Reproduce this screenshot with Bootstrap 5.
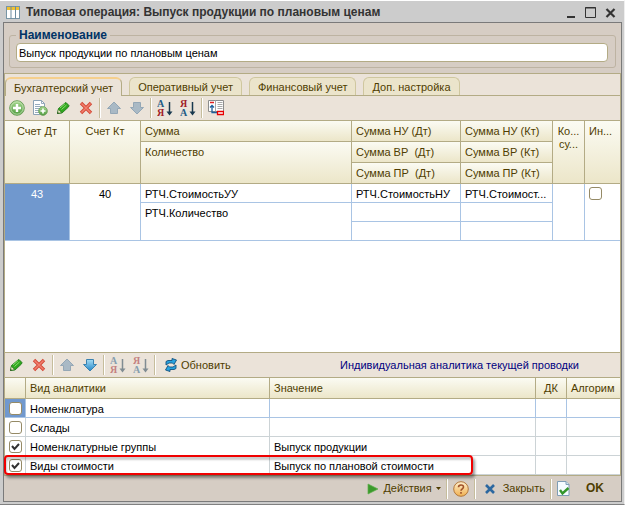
<!DOCTYPE html>
<html lang="ru">
<head>
<meta charset="utf-8">
<meta name="viewport" content="width=device-width, initial-scale=1">
<title>Типовая операция</title>
<link href="https://cdn.jsdelivr.net/npm/bootstrap@5.3.0/dist/css/bootstrap.min.css" rel="stylesheet">
<style>
:root{--olive:#b3ab85;--sand:#d6cdc4;--cream:#ebe3d9;--brown:#4f3d00;--sky:#a9c4e4}
body{font:11px/13px "Liberation Sans",Arial,sans-serif;color:#000;background:#ccc}
button{font:inherit;color:inherit;background:none;border:0;padding:0}
svg{display:block;flex:none}
.win{border-top:1px solid #fff;border-right:1px solid #eee;border-bottom:1px solid #808080;padding:0 2px 2px 3px}
.titlebar{height:21px;padding:5px 6px 0 3px;font-size:12px;font-weight:700;color:#333;gap:6px}
.wbtns{gap:9px}
.client{border:1px solid #7a7a7a;background:var(--sand)}
.form-zone{padding:5px;height:50px}
.name-box{border:1px solid #bdb3a2;border-radius:3px;height:33px;margin-top:7px;padding:7px 7px 5px 6px;position:relative}
.name-box label{position:absolute;top:-7px;left:6px;padding:0 3px;background:var(--sand);color:#003366;font-size:12px;font-weight:700}
.name-box input{display:block;width:100%;height:19px;border:1px solid var(--olive);border-radius:4px;background:#fff;padding:0 2px;outline:0;font-size:11px;color:#000}
.work{border:solid var(--olive);border-width:1px 1px 0;background:var(--cream)}
.tabs{height:22px;padding-top:3px;gap:7px;flex-wrap:nowrap;box-shadow:inset 0 -1px var(--olive)}
.tabs .nav-link{height:18px;border:1px solid #cfc79f;border-bottom:0;border-radius:6px 6px 0 0;background:#ebe4cb;color:var(--brown);padding:2px 8px 0;line-height:15px;white-space:nowrap}
.tabs .nav-link.active{height:19px;background:var(--cream);border-color:var(--olive);border-top:2px solid #f5cf8c;padding:1px 8px 0}
.tools{height:25px;padding:0 4px;gap:7px;border-bottom:1px solid var(--olive);color:var(--brown)}
.tools.lower{height:26px;padding-left:3px;border-top:1px solid var(--olive)}
.vline{flex:none;width:2px;height:20px;margin:0 -2px;background:linear-gradient(90deg,#c6bd9c 50%,#fff 50%)}
.upper-box{background:#fff}
.grid{width:100%;table-layout:fixed;border-collapse:separate;border-spacing:0;background:#fff}
.grid th,.grid td{padding:4px 4px 0;overflow:hidden;white-space:nowrap;text-overflow:ellipsis;vertical-align:top;border-right:1px solid var(--sky);border-bottom:1px solid var(--sky)}
.grid th{font-weight:400;color:var(--brown);border-color:var(--olive);background:linear-gradient(#fbfbf3,#ece6c9)}
.grid tr>.edge{border-right:0}
.grid thead tr{height:21px}
.grid tbody tr{height:19px}
.grid .picked{background:#7098ce;color:#fff}
.grid .bare{padding:3px 0 0 4px}
.soft td{border-color:#ccd3d6}
.c-acc{width:65px}.c-cor{width:71px}.c-dt{width:109px}.c-kt{width:92px}.c-ko{width:32px}.c-in{width:35px}
.c-chk{width:21px}.c-kind{width:244px}.c-dk{width:31px}.c-alg{width:53px}
.tick{display:block;appearance:none;width:13px;height:13px;margin:0;border:1px solid #958a66;border-radius:3px;background:#fff}
.tick:checked{background:#fff url("data:image/svg+xml,%3Csvg xmlns='http://www.w3.org/2000/svg' viewBox='0 0 11 11'%3E%3Cpath d='M2 5l2.500 3L9 3' fill='none' stroke='%23333' stroke-width='2'/%3E%3C/svg%3E")}
.marker{position:absolute;left:-1px;right:147px;bottom:0;height:20px;border:2px solid #f00000;border-radius:4px;box-shadow:2px 3px 3px #0006,inset 1px 3px 2px #0003;pointer-events:none}
.bottom{height:26px;color:var(--brown);padding-right:17px;gap:8px;border-top:1px solid var(--olive)}
.bottom .vline{margin:0 -3px}
.caption-blue{color:#000080;margin-right:37px}
.ok-btn{font-size:12px;font-weight:700;padding-left:8px}
.glyph{font:bold 10px "Liberation Serif",serif}
</style>
<script src="https://cdn.jsdelivr.net/npm/bootstrap@5.3.0/dist/js/bootstrap.bundle.min.js"></script>
</head>
<body>
<svg width="0" height="0" class="position-absolute" aria-hidden="true">
<defs>
<linearGradient id="gg" x2="0" y2="1"><stop stop-color="#a9d992"/><stop offset="1" stop-color="#4e9a3e"/></linearGradient>
<linearGradient id="gb" x2="0" y2="1"><stop stop-color="#a4dcf4"/><stop offset="1" stop-color="#2487c8"/></linearGradient>
<linearGradient id="go" x2="0" y2="1"><stop stop-color="#fff0cf"/><stop offset="1" stop-color="#f0b050"/></linearGradient>
<symbol id="i-add" viewBox="0 0 16 16"><circle cx="8" cy="8" r="7.300" fill="url(#gg)" stroke="#6ea05c"/><circle cx="8" cy="8" r="6.200" fill="none" stroke="#d2ecc4" stroke-width=".7"/><path d="M8 4v8M4 8h8" stroke="#fff" stroke-width="2.400"/></symbol>
<symbol id="i-copy" viewBox="0 0 16 16"><path d="M1.500 .5h8l3 3v11h-11z" fill="#fff" stroke="#8ba2b5"/><path d="M9.500 .5v3h3M3 4.500h5M3 6.500h7M3 8.500h5M3 10.500h4M3 12.500h4" fill="none" stroke="#8ba2b5" stroke-width=".9"/><circle cx="11" cy="11" r="4.400" fill="url(#gg)" stroke="#6ea05c" stroke-width=".8"/><path d="M11 8.500v5M8.500 11h5" stroke="#fff" stroke-width="1.600"/></symbol>
<symbol id="i-pen" viewBox="0 0 16 16"><path d="M2.500 13.500l1-5 6.500-5.500 1-.5 3 3-.5 1.500-6.500 6z" fill="#2fa51e" stroke="#167412" stroke-width=".8"/><path d="M5 8l5-4.300M6.500 9.500l5-4.500" stroke="#8ee070"/><path d="M2.500 13.500l.8-4 3.200 3z" fill="#f4eccb" stroke="#38702a" stroke-width=".6"/><path d="M2.300 13.700l.4-1.700 1.300 1.300z" fill="#153a10"/></symbol>
<symbol id="i-del" viewBox="0 0 16 16"><path d="M3 3l10 10M13 3L3 13" stroke="#d34836" stroke-width="3.400"/><path d="M3.500 3.500l9 9M12.500 3.500l-9 9" stroke="#f2806f" stroke-width="1.500"/></symbol>
<symbol id="i-up" viewBox="0 0 16 16"><path d="M8 2l6.500 6.500h-3v5h-7v-5h-3z" stroke-linejoin="round"/></symbol>
<symbol id="i-down" viewBox="0 0 16 16"><path d="M8 14L1.500 7.500h3v-5h7v5h3z" stroke-linejoin="round"/></symbol>
<symbol id="i-az" viewBox="0 0 16 18"><text x="0" y="8" class="glyph" fill="#1f5c86">А</text><text x="0" y="17" class="glyph" fill="#a02028">Я</text><path d="M12.500 3v11" stroke="#18384f" stroke-width="1.500"/><path d="M9.500 12.500h6l-3 4z" fill="#18384f"/></symbol>
<symbol id="i-za" viewBox="0 0 16 18"><text x="0" y="8" class="glyph" fill="#a02028">Я</text><text x="0" y="17" class="glyph" fill="#1f5c86">А</text><path d="M12.500 3v11" stroke="#18384f" stroke-width="1.500"/><path d="M9.500 12.500h6l-3 4z" fill="#18384f"/></symbol>
<symbol id="i-cols" viewBox="0 0 16 16"><path d="M.5 .5h15v11H.5z" fill="#fff" stroke="#8d8d8d"/><path d="M7.500 .5v11M9.500 2.500h5M9.500 4.500h5M9.500 6.500h5M9.500 8.500h5" stroke="#a8a8a8"/><path d="M2 2.500h4" stroke="#e02020" stroke-width="1.500"/><path d="M4 5v7.500h5M2 7.500l2-2 2 2" fill="none" stroke="#1d5f9b" stroke-width="1.300"/><path d="M9.500 11.500h6v3h-6z" fill="#fff" stroke="#e80000" stroke-width="1.300"/></symbol>
<symbol id="i-ref" viewBox="0 0 12 14"><path d="M1 7V3.500L3 2.500h4V.5L11.500 2 9 6.500 7.500 5H4z" fill="#27a3e0" stroke="#14507e" stroke-width=".9"/><path d="M11 7v3.500L9 11.500H5v2L.5 12 3 7.500 4.500 9H8z" fill="#27a3e0" stroke="#14507e" stroke-width=".9"/></symbol>
</defs>
</svg>
<div class="win d-flex flex-column min-vh-100">
  <header class="titlebar d-flex align-items-start">
    <svg width="14" height="13" viewBox="0 0 14 13"><rect x=".5" y=".5" width="13" height="12" fill="#fff" stroke="#7895a5"/><path d="M1 2.500h12" stroke="#f0c030" stroke-width="3"/><path d="M5 0v13M9.500 0v13" stroke="#6c8c9f"/></svg>
    <span class="flex-grow-1 text-nowrap">Типовая операция: Выпуск продукции по плановым ценам</span>
    <div class="wbtns d-flex">
      <button type="button" aria-label="Свернуть"><svg width="10" height="14"><path d="M1 11h8" stroke="#333" stroke-width="2"/></svg></button>
      <button type="button" aria-label="Развернуть"><svg width="11" height="14"><path d="M.5 1.500h10v10H.5zM0 2h11" fill="none" stroke="#333"/></svg></button>
      <button type="button" aria-label="Закрыть окно"><svg width="11" height="14"><path d="M1.500 3l8 8M9.500 3l-8 8" stroke="#333" stroke-width="2.200"/></svg></button>
    </div>
  </header>
  <main class="client d-flex flex-column flex-grow-1">
    <div class="form-zone">
      <div class="name-box"><label for="nm">Наименование</label><input id="nm" type="text" value="Выпуск продукции по плановым ценам"></div>
    </div>
    <div class="work d-flex flex-column flex-grow-1">
      <nav class="nav tabs" aria-label="Разделы">
        <button type="button" class="nav-link active">Бухгалтерский учет</button>
        <button type="button" class="nav-link">Оперативный учет</button>
        <button type="button" class="nav-link">Финансовый учет</button>
        <button type="button" class="nav-link">Доп. настройка</button>
      </nav>
      <div class="tools d-flex align-items-center">
        <button type="button" aria-label="Добавить"><svg width="16" height="16"><use href="#i-add"/></svg></button>
        <button type="button" aria-label="Скопировать"><svg width="16" height="16"><use href="#i-copy"/></svg></button>
        <button type="button" aria-label="Изменить"><svg width="16" height="16"><use href="#i-pen"/></svg></button>
        <button type="button" aria-label="Удалить"><svg width="16" height="16"><use href="#i-del"/></svg></button>
        <span class="vline"></span>
        <button type="button" aria-label="Вверх"><svg width="16" height="16" fill="#a9b9c5" stroke="#94a7b6"><use href="#i-up"/></svg></button>
        <button type="button" aria-label="Вниз"><svg width="16" height="16" fill="#a9b9c5" stroke="#94a7b6"><use href="#i-down"/></svg></button>
        <span class="vline"></span>
        <button type="button" aria-label="По возрастанию"><svg width="16" height="18"><use href="#i-az"/></svg></button>
        <button type="button" aria-label="По убыванию"><svg width="16" height="18"><use href="#i-za"/></svg></button>
        <span class="vline"></span>
        <button type="button" aria-label="Колонки"><svg width="16" height="16"><use href="#i-cols"/></svg></button>
      </div>
      <div class="upper-box flex-grow-1">
        <table class="grid">
          <colgroup><col class="c-acc"><col class="c-cor"><col><col class="c-dt"><col class="c-kt"><col class="c-ko"><col class="c-in"></colgroup>
          <thead>
            <tr><th rowspan="3" class="text-center">Счет Дт</th><th rowspan="3" class="text-center">Счет Кт</th><th>Сумма</th><th>Сумма НУ (Дт)</th><th>Сумма НУ (Кт)</th><th rowspan="3" class="text-center">Ко...<br>су...</th><th rowspan="3" class="edge">Ин...</th></tr>
            <tr><th rowspan="2">Количество</th><th>Сумма ВР &nbsp;(Дт)</th><th>Сумма ВР (Кт)</th></tr>
            <tr><th>Сумма ПР &nbsp;(Дт)</th><th>Сумма ПР (Кт)</th></tr>
          </thead>
          <tbody>
            <tr><td rowspan="3" class="picked text-center">43</td><td rowspan="3" class="text-center">40</td><td>РТЧ.СтоимостьУУ</td><td>РТЧ.СтоимостьНУ</td><td>РТЧ.Стоимост...</td><td rowspan="3"></td><td rowspan="3" class="edge bare"><input class="tick" type="checkbox" aria-label="Ин..."></td></tr>
            <tr><td rowspan="2">РТЧ.Количество</td><td></td><td></td></tr>
            <tr><td></td><td></td></tr>
          </tbody>
        </table>
      </div>
      <div class="tools lower d-flex align-items-center">
        <button type="button" aria-label="Изменить"><svg width="16" height="16"><use href="#i-pen"/></svg></button>
        <button type="button" aria-label="Удалить"><svg width="16" height="16"><use href="#i-del"/></svg></button>
        <span class="vline"></span>
        <button type="button" aria-label="Вверх"><svg width="16" height="16" fill="#a9b9c5" stroke="#94a7b6"><use href="#i-up"/></svg></button>
        <button type="button" aria-label="Вниз"><svg width="16" height="16" fill="url(#gb)" stroke="#3a82b0"><use href="#i-down"/></svg></button>
        <span class="vline"></span>
        <button type="button" class="opacity-50" aria-label="По возрастанию"><svg width="16" height="18"><use href="#i-az"/></svg></button>
        <button type="button" class="opacity-50" aria-label="По убыванию"><svg width="16" height="18"><use href="#i-za"/></svg></button>
        <span class="vline"></span>
        <button type="button" class="d-flex align-items-center gap-1 ms-1"><svg width="12" height="14"><use href="#i-ref"/></svg><span>Обновить</span></button>
        <span class="caption-blue ms-auto text-nowrap">Индивидуальная аналитика текущей проводки</span>
      </div>
      <div class="position-relative">
        <table class="grid">
          <colgroup><col class="c-chk"><col class="c-kind"><col><col class="c-dk"><col class="c-alg"></colgroup>
          <thead><tr><th aria-label="Отметка"></th><th>Вид аналитики</th><th>Значение</th><th class="text-center">ДК</th><th class="edge">Алгорим</th></tr></thead>
          <tbody>
            <tr><td class="picked bare"><input class="tick" type="checkbox" id="k1"></td><td><label for="k1">Номенклатура</label></td><td></td><td></td><td class="edge"></td></tr>
            <tr class="soft"><td class="bare"><input class="tick" type="checkbox" id="k2"></td><td><label for="k2">Склады</label></td><td></td><td></td><td class="edge"></td></tr>
            <tr class="soft"><td class="bare"><input class="tick" type="checkbox" id="k3" checked></td><td><label for="k3">Номенклатурные группы</label></td><td>Выпуск продукции</td><td></td><td class="edge"></td></tr>
            <tr class="soft"><td class="bare"><input class="tick" type="checkbox" id="k4" checked></td><td><label for="k4">Виды стоимости</label></td><td>Выпуск по плановой стоимости</td><td></td><td class="edge"></td></tr>
          </tbody>
        </table>
        <div class="marker"></div>
      </div>
    </div>
    <footer class="bottom d-flex align-items-center justify-content-end">
      <button type="button" class="d-flex align-items-center"><svg class="me-1" width="12" height="12"><path d="M1 1l10 5-10 5z" fill="#3c9a2c" stroke="#5fb04c" stroke-width=".7"/></svg><span>Действия</span><svg class="ms-1" width="5" height="4"><path d="M0 0h5L2.500 3z" fill="#4f3d00"/></svg></button>
      <span class="vline"></span>
      <button type="button" aria-label="Справка"><svg width="16" height="16"><circle cx="8" cy="8" r="7.300" fill="url(#go)" stroke="#b3783c"/><path d="M5.500 6.300C5.500 3.200 10.500 3.200 10.500 6c0 1.800-2.500 1.800-2.500 3.700M8 11v1.800" fill="none" stroke="#a0522a" stroke-width="1.600"/></svg></button>
      <span class="vline"></span>
      <button type="button" class="d-flex align-items-center gap-2 ms-1"><svg width="10" height="10"><path d="M1 1l8 8M9 1L1 9" stroke="#2c68a0" stroke-width="2.600"/></svg><span>Закрыть</span></button>
      <span class="vline"></span>
      <button type="button" aria-label="Записать"><svg width="13" height="15"><path d="M.5 .5h8.500l3 3v11H.5z" fill="#f5fbff" stroke="#7f9db5"/><path d="M9 .5v3h3" fill="#cfe2ee" stroke="#7f9db5"/><path d="M3 9l2.500 3.500L11.500 7" fill="none" stroke="#33962a" stroke-width="2.400"/></svg></button>
      <button type="button" class="ok-btn">OK</button>
    </footer>
  </main>
</div>
</body>
</html>
